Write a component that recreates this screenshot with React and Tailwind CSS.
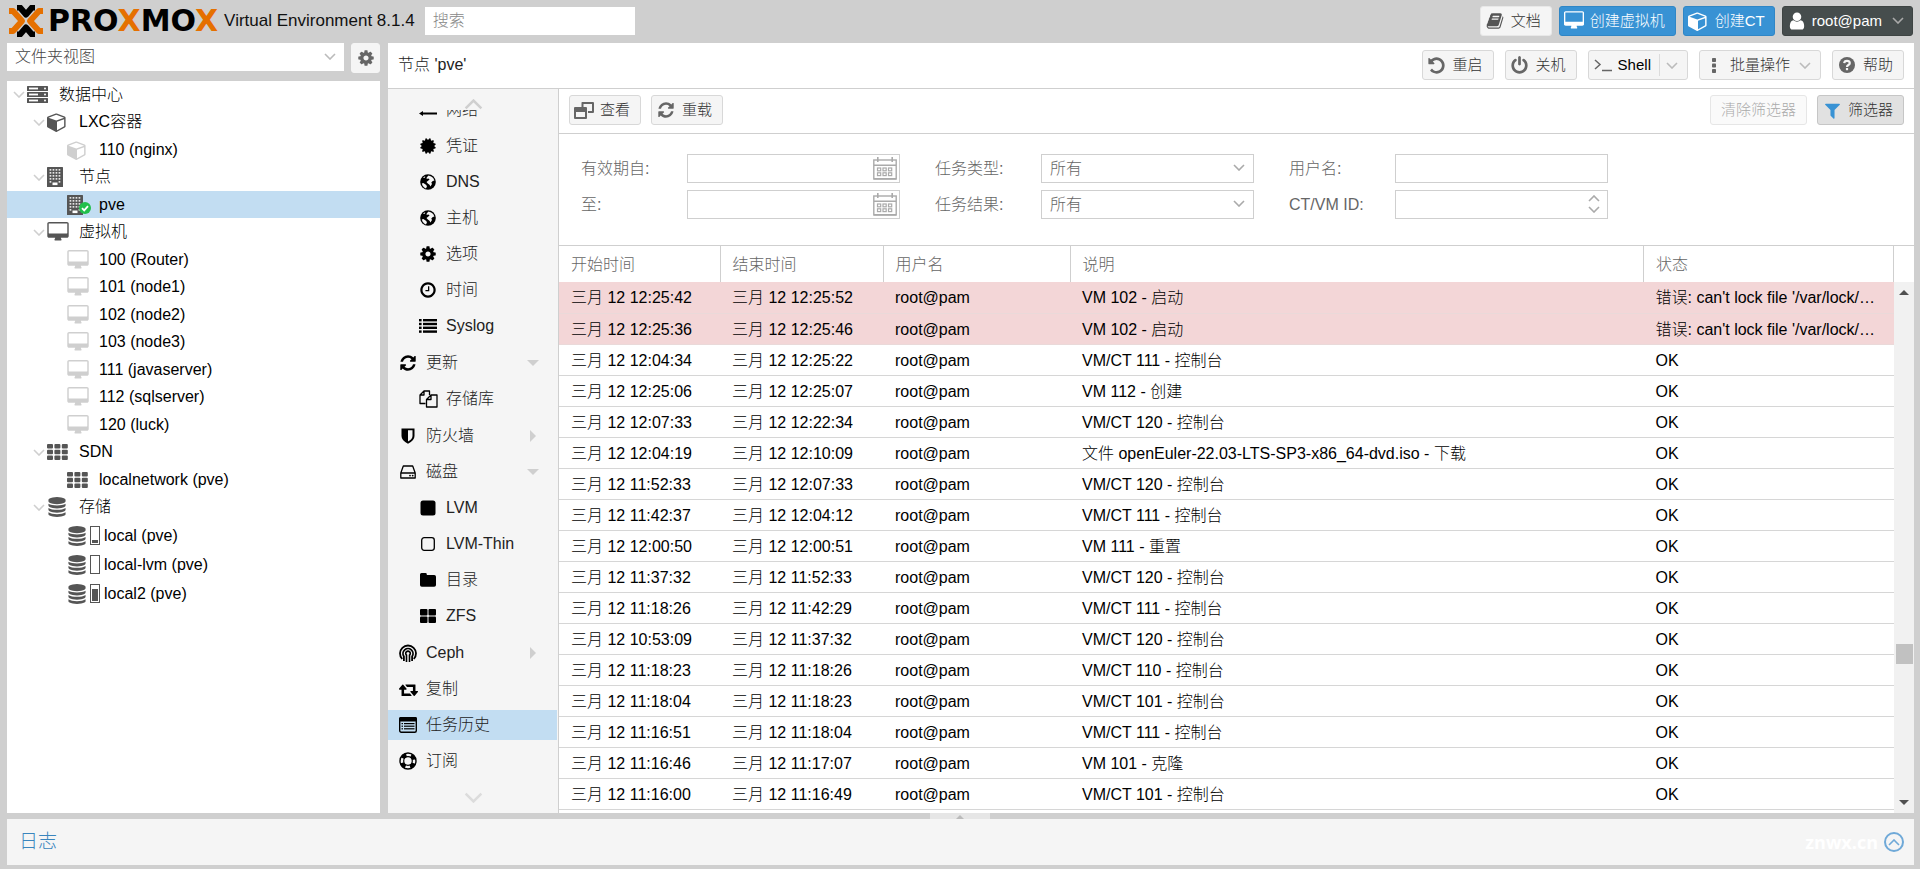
import React, { useState } from 'react';
import clsx from 'clsx';

// Font Awesome 4 shapes on the 1792 grid
const FA = {
  cube: 'M896 1629l640-349v-636l-640 233v752zm-64-865l698-254-698-254-698 254zm832-252v768q0 35-18 65t-49 47l-704 384q-28 16-61 16t-61-16l-704-384q-31-17-49-47t-18-65v-768q0-40 23-73t61-47l704-256q22-8 44-8t44 8l704 256q38 14 61 47t23 73z',
  desktop: 'M1728 992v-832q0-13-9.5-22.5t-22.5-9.5h-1600q-13 0-22.5 9.5t-9.5 22.5v832q0 13 9.5 22.5t22.5 9.5h1600q13 0 22.5-9.5t9.5-22.5zm128-832v1088q0 66-47 113t-113 47h-544q0 37 16 77.5t32 71 16 43.5q0 26-19 45t-45 19h-512q-26 0-45-19t-19-45q0-14 16-44t32-70 16-78h-544q-66 0-113-47t-47-113v-1088q0-66 47-113t113-47h1600q66 0 113 47t47 113z',
  refresh: 'M1639 1056q0 5-1 7-64 268-268 434.5t-478 166.5q-146 0-282.5-55t-243.5-157l-129 129q-19 19-45 19t-45-19-19-45v-448q0-26 19-45t45-19h448q26 0 45 19t19 45-19 45l-137 137q71 66 161 102t187 36q134 0 250-65t186-179q11-17 53-117 8-23 30-23h192q13 0 22.5 9.5t9.5 22.5zm25-800v448q0 26-19 45t-45 19h-448q-26 0-45-19t-19-45 19-45l138-138q-148-137-349-137-134 0-250 65t-186 179q-11 17-53 117-8 23-30 23h-199q-13 0-22.5-9.5t-9.5-22.5v-7q65-268 270-434.5t480-166.5q146 0 284 55.5t245 156.5l130-129q19-19 45-19t45 19 19 45z',
  undo: 'M1664 896q0 156-61 298t-164 245-245 164-298 61q-172 0-327-72.5t-264-204.5q-7-10-6.5-22.5t8.5-20.5l137-138q10-9 25-9 16 2 23 12 73 95 179 147t225 52q104 0 198.5-40.5t163.5-109.5 109.5-163.5 40.5-198.5-40.5-198.5-109.5-163.5-163.5-109.5-198.5-40.5q-98 0-188 35.5t-160 101.5l137 138q31 30 14 69-17 40-59 40h-448q-26 0-45-19t-19-45v-448q0-42 40-59 39-17 69 14l130 129q107-101 244.5-156.5t284.5-55.5q156 0 298 61t245 164 164 245 61 298z',
  power: 'M1664 896q0 156-61 298t-164 245-245 164-298 61-298-61-245-164-164-245-61-298q0-182 80.5-343t226.5-270q43-32 95.5-25t83.5 50q32 42 24.5 94.5t-49.5 84.5q-98 74-151.5 181t-53.5 228q0 104 40.5 198.5t109.5 163.5 163.5 109.5 198.5 40.5 198.5-40.5 163.5-109.5 109.5-163.5 40.5-198.5q0-121-53.5-228t-151.5-181q-42-32-49.5-84.5t24.5-94.5q31-43 84-50t95 25q146 109 226.5 270t80.5 343zm-640-768v640q0 52-38 90t-90 38-90-38-38-90v-640q0-52 38-90t90-38 90 38 38 90z',
  gear: 'M1152 896q0-106-75-181t-181-75-181 75-75 181 75 181 181 75 181-75 75-181zm512-109v222q0 12-8 23t-20 13l-185 28q-19 54-39 91 35 50 107 138 10 12 10 25t-9 23q-27 37-99 108t-94 71q-12 0-26-9l-138-108q-44 23-91 38-16 136-29 186-7 28-36 28h-222q-14 0-24.5-8.5t-11.5-21.5l-28-184q-49-16-90-37l-141 107q-10 9-25 9-14 0-25-11-126-114-165-168-7-10-7-23 0-12 8-23 15-21 51-66.5t54-70.5q-27-50-41-99l-183-27q-13-2-21-12.5t-8-23.5v-222q0-12 8-23t19-13l186-28q14-46 39-92-40-57-107-138-10-12-10-24 0-10 9-23 26-36 98.5-107.5t94.5-71.5q13 0 26 10l138 107q44-23 91-38 16-136 29-186 7-28 36-28h222q14 0 24.5 8.5t11.5 21.5l28 184q49 16 90 37l142-107q9-9 24-9 13 0 25 10 129 119 165 170 7 8 7 22 0 12-8 23-15 21-51 66.5t-54 70.5q26 50 41 98l183 28q13 2 21 12.5t8 23.5z',
  database: 'M896 768q237 0 443-43t325-127v170q0 69-103 128t-280 93.5-385 34.5-385-34.5-280-93.5-103-128v-170q119 84 325 127t443 43zm0 768q237 0 443-43t325-127v170q0 69-103 128t-280 93.5-385 34.5-385-34.5-280-93.5-103-128v-170q119 84 325 127t443 43zm0-384q237 0 443-43t325-127v170q0 69-103 128t-280 93.5-385 34.5-385-34.5-280-93.5-103-128v-170q119 84 325 127t443 43zm0-1152q208 0 385 34.5t280 93.5 103 128v128q0 69-103 128t-280 93.5-385 34.5-385-34.5-280-93.5-103-128v-128q0-69 103-128t280-93.5 385-34.5z',
  user: 'M1536 1399q0 109-62.5 187t-150.5 78h-854q-88 0-150.5-78t-62.5-187q0-85 8.5-160.5t31.5-152 58.5-131 94-89 134.5-34.5q131 128 313 128t313-128q76 0 134.5 34.5t94 89 58.5 131 31.5 152 8.5 160.5zm-256-887q0 159-112.5 271.5t-271.5 112.5-271.5-112.5-112.5-271.5 112.5-271.5 271.5-112.5 271.5 112.5 112.5 271.5z',
  clock: 'M1024 544v448q0 14-9 23t-23 9h-320q-14 0-23-9t-9-23v-64q0-14 9-23t23-9h224v-352q0-14 9-23t23-9h64q14 0 23 9t9 23zm416 352q0-148-73-273t-198-198-273-73-273 73-198 198-73 273 73 273 198 198 273 73 273-73 198-198 73-273zm224 0q0 209-103 385.5t-279.5 279.5-385.5 103-385.5-103-279.5-279.5-103-385.5 103-385.5 279.5-279.5 385.5-103 385.5 103 279.5 279.5 103 385.5z',
  retweet: 'M1216 1568q0 13-9.5 22.5t-22.5 9.5h-960q-8 0-13.5-2t-9-7-5.5-8-3-11.5-1-11.5v-600h-192q-26 0-45-19t-19-45q0-24 15-41l320-384q19-22 49-22t49 22l320 384q15 17 15 41 0 26-19 45t-45 19h-192v384h576q16 0 25 11l160 192q7 10 7 21zm640-416q0 24-15 41l-320 384q-20 23-49 23t-49-23l-320-384q-15-17-15-41 0-26 19-45t45-19h192v-384h-576q-16 0-25-12l-160-192q-7-9-7-20 0-13 9.5-22.5t22.5-9.5h960q8 0 13.5 2t9 7 5.5 8 3 11.5 1 11.5v600h192q26 0 45 19t19 45z',
  filter: 'M1595 295q17 41-14 70l-493 493v742q0 42-39 59-13 5-25 5-27 0-45-19l-256-256q-19-19-19-45v-486l-493-493q-31-29-14-70 17-39 59-39h1280q42 0 59 39z',
  certificate: 'M1504 896l138 135q30 28 20 70-12 41-52 51l-188 48 53 186q12 41-19 70-29 31-70 19l-186-53-48 188q-10 40-51 52-12 2-19 2-31 0-51-22l-135-138-135 138q-28 30-70 20-41-11-51-52l-48-188-186 53q-41 12-70-19-31-29-19-70l53-186-188-48q-40-10-52-51-10-42 20-70l138-135-138-135q-30-28-20-70 12-41 52-51l188-48-53-186q-12-41 19-70 29-31 70-19l186 53 48-188q10-41 51-51 41-12 70 19l135 139 135-139q29-30 70-19 41 10 51 51l48 188 186-53q41-12 70 19 31 29 19 70l-53 186 188 48q40 10 52 51 10 42-20 70z',
  book: 'M1703 478q40 57 18 129l-275 906q-19 64-76.5 107.5t-122.5 43.5h-923q-77 0-148.5-53.5t-99.5-131.5q-24-67-2-127 0-4 3-27t4-37q1-8-3-21.5t-3-19.5q2-11 8-21t16.5-23.5 16.5-23.5q23-38 45-91.5t30-91.5q3-10 .5-30t-.5-28q3-11 17-28t17-23q21-36 42-92t25-90q1-9-2.5-32t.5-28q4-13 22-30.5t22-22.5q19-26 42.5-84.5t27.5-96.5q1-8-3-25.5t-2-26.5q2-8 9-18t18-23 17-21q8-12 16.5-30.5t15-35 16-36 19.5-32 26.5-23.5 36-11.5 47.5 5.5l-1 3q38-9 51-9h761q74 0 114 56t18 130l-274 906q-36 119-71.5 153.5t-128.5 34.5h-869q-27 0-38 15-11 16-1 43 24 70 144 70h923q29 0 56-15.5t35-41.5l300-987q7-22 5-57 38 15 59 43zm-1064 2q-4 13 2 22.5t20 9.5h608q13 0 25.5-9.5t16.5-22.5l21-64q4-13-2-22.5t-20-9.5h-608q-13 0-25.5 9.5t-16.5 22.5zm-83 256q-4 13 2 22.5t20 9.5h608q13 0 25.5-9.5t16.5-22.5l21-64q4-13-2-22.5t-20-9.5h-608q-13 0-25.5 9.5t-16.5 22.5z',
};

const Fa = ({ name, className = 'h-[18px] w-[18px]' }) => {
  const wide = name === 'desktop' || name === 'retweet';
  return (
    <svg viewBox={wide ? '-64 0 1920 1792' : '0 0 1792 1792'} fill="currentColor" className={clsx('shrink-0', className)} aria-hidden="true">
      <path d={FA[name]} />
    </svg>
  );
};

const Svg = ({ box = '0 0 18 18', className = 'h-[18px] w-[18px]', children }) => (
  <svg viewBox={box} fill="currentColor" className={clsx('shrink-0', className)} aria-hidden="true">{children}</svg>
);

const Chevron = ({ up, className = 'h-[7px] w-[12px]' }) => (
  <svg viewBox="0 0 12 7" fill="none" stroke="currentColor" strokeWidth="1.6" className={clsx('shrink-0', up && 'rotate-180', className)} aria-hidden="true">
    <path d="M1 1l5 5 5-5" />
  </svg>
);

const ServerIcon = () => (
  <Svg box="0 0 21 17" className="h-[17px] w-[21px]">
    {[0, 6, 12].map((y) => (
      <g key={y}>
        <rect y={y} width="21" height="5" rx="0.5" />
        <rect x="2" y={y + 1.6} width="9" height="1.8" fill="#fff" />
        <circle cx="18" cy={y + 2.5} r="1" fill="#fff" />
      </g>
    ))}
  </Svg>
);

const BuildingIcon = () => (
  <Svg box="0 0 16 20" className="h-[20px] w-[16px]">
    <rect width="16" height="20" rx="0.5" />
    {[2, 5, 8, 11, 14].map((y) =>
      [2.6, 5.6, 8.6, 11.6].map((x) => (
        (y === 14 && x > 3 && x < 11) ? null : <rect key={`${x}-${y}`} x={x} y={y} width="1.7" height="1.7" fill="#e4e4e4" />
      ))
    )}
    <rect x="5.5" y="15.5" width="5" height="2.6" fill="#fff" />
  </Svg>
);

const GridIcon = () => (
  <Svg box="0 0 21 16" className="h-[16px] w-[21px]">
    {[0, 5.8, 11.6].map((y) => [0, 7.4, 14.8].map((x) => (
      <rect key={`${x}-${y}`} x={x} y={y} width="6" height="4.4" rx="1" />
    )))}
  </Svg>
);

const GlobeIcon = () => (
  <Svg box="0 0 16 16" className="h-[16px] w-[16px]">
    <circle cx="8" cy="8" r="7.8" />
    <path fill="#f5f5f5" d="M8.6 1.6l2.6 0.8 2 1.6 1.2 2.6-1.6 0.3-1.5 1.6 0.7 1.5-1.6 2.4-0.9-1.6-1.7-1.4-1.3-1.3 1.9-1.5 1.2-1.3-1.4-0.8-1.6 0.5 0.2-1.7z" />
    <path fill="#f5f5f5" d="M1.8 9.4l1.5-0.3 1.9 1.2 1.8 1.6-0.6 1.8-0.6 0.8-1.9-1.2-1.4-1.8z" />
    <path fill="#f5f5f5" d="M3 3.9l1.5-1.3 0.9 0.2-1 1.2z" />
  </Svg>
);

const ListIcon = () => (
  <Svg box="0 0 18 14" className="h-[14px] w-[18px]">
    {[0, 3.8, 7.6, 11.4].map((y) => (
      <g key={y}>
        <rect y={y} width="2.6" height="2.4" />
        <rect x="4" y={y} width="14" height="2.4" />
      </g>
    ))}
  </Svg>
);

const FilesIcon = () => (
  <Svg box="0 0 19 18" className="h-[18px] w-[19px]">
    <g fill="none" stroke="currentColor" strokeWidth="1.3" strokeLinejoin="round">
      <path d="M6.5 13.5H1V5L5 1h5.500v4M5 1v4H1" />
      <path d="M12 5h6v12H7.500V9.500zM12 5v4.500H7.500" />
    </g>
  </Svg>
);

const ShieldIcon = () => (
  <Svg box="0 0 14 16" className="h-[16px] w-[14px]">
    <path fillRule="evenodd" d="M0.5 0.5h13v7.6q0 4.6-6.5 7.7Q0.500 12.700 0.500 8.100zM7 2.300v11.200Q11.500 11 11.500 8V2.300z" />
  </Svg>
);

const HddIcon = () => (
  <Svg box="0 0 16 14" className="h-[14px] w-[16px]">
    <path fill="none" stroke="currentColor" strokeWidth="1.3" strokeLinejoin="round" d="M0.800 8L3.300 1h9.400L15.200 8v5H0.800zM0.800 8h14.400" />
    <circle cx="10" cy="10.6" r="0.9" />
    <circle cx="12.700" cy="10.600" r="0.9" />
  </Svg>
);

const CephIcon = () => (
  <Svg box="0 0 18 20" className="h-[20px] w-[18px]">
    <g fill="none" stroke="currentColor">
      <path d="M3.200 16A8 8 0 1 1 14.800 16" strokeWidth="1.800" />
      <path d="M4.900 18V13.500A5 5 0 1 1 13.100 13.500V18" strokeWidth="1.800" />
      <path d="M7.500 19V12.200A2.300 2.300 0 1 1 10.500 12.200V19" strokeWidth="1.600" />
    </g>
  </Svg>
);

const TaskIcon = () => (
  <Svg box="0 0 18 16" className="h-[16px] w-[18px]">
    <rect x="0.700" y="0.700" width="16.600" height="14.600" rx="1.500" fill="none" stroke="currentColor" strokeWidth="1.400" />
    <rect width="18" height="4.500" rx="1.500" />
    {[6, 8.600, 11.200].map((y) => (
      <g key={y}>
        <rect x="2.500" y={y} width="1.500" height="1.200" />
        <rect x="5" y={y} width="10.500" height="1.200" />
      </g>
    ))}
  </Svg>
);

const RingIcon = () => (
  <Svg>
    <g fill="none" stroke="currentColor">
      <circle cx="9" cy="9" r="8" strokeWidth="1.400" />
      <circle cx="9" cy="9" r="4.300" strokeWidth="1.200" />
      <circle cx="9" cy="9" r="6.200" strokeWidth="4" strokeDasharray="4.900 4.840" strokeDashoffset="-2.400" />
    </g>
  </Svg>
);

const NetIcon = () => (
  <Svg box="0 0 18 12" className="h-[12px] w-[18px]">
    <path d="M18 2.500L14 0v1.500H0v2h14V5zM0 9.500L4 7v1.500h14v2H4V12z" />
  </Svg>
);

const SquareIcon = ({ open }) => (
  <Svg box="0 0 16 16" className="h-[16px] w-[16px]">
    {open
      ? <rect x="1.700" y="1.700" width="12.600" height="12.600" rx="2.500" fill="none" stroke="currentColor" strokeWidth="1.300" />
      : <rect x="0.500" y="0.500" width="15" height="15" rx="2.500" />}
  </Svg>
);

const FolderIcon = () => (
  <Svg box="0 0 16 14" className="h-[14px] w-[16px]">
    <path d="M1.500 0h4q1.300 0 1.300 1.300v0.700h7.400Q16 2 16 3.700v8.300q0 1.800-1.800 1.800H1.800Q0 13.800 0 12V1.500Q0 0 1.500 0z" />
  </Svg>
);

const LargeGridIcon = () => (
  <Svg box="0 0 16 14" className="h-[14px] w-[16px]">
    {[0, 7.500].map((y) => [0, 8.500].map((x) => <rect key={`${x}-${y}`} x={x} y={y} width="7.500" height="6.500" rx="1" />))}
  </Svg>
);

const ViewIcon = () => (
  <Svg box="0 0 20 17" className="h-[17px] w-[20px]">
    <path fillRule="evenodd" d="M8 0h11q1 0 1 1v9q0 1-1 1h-5V9h4V2H9.500v3H7.500V1q0-1 .5-1z" />
    <path fillRule="evenodd" d="M1 5h11q1 0 1 1v10q0 1-1 1H1q-1 0-1-1V6q0-1 1-1zm1 5v5h9v-5z" />
  </Svg>
);

const TerminalIcon = () => (
  <Svg box="0 0 18 14">
    <path fill="none" stroke="currentColor" strokeWidth="1.500" d="M1 2l5 4.500L1 11M8 12.500h10" />
  </Svg>
);

const DotsIcon = () => (
  <Svg box="0 0 4 15" className="h-[15px] w-[4px]">
    {[0, 5.500, 11].map((y) => <rect key={y} y={y} width="4" height="4" rx="0.800" />)}
  </Svg>
);

const HelpIcon = () => (
  <Svg box="0 0 16 16" className="h-[16px] w-[16px]">
    <circle cx="8" cy="8" r="8" />
    <path fill="none" stroke="#f5f5f5" strokeWidth="2.200" d="M5.200 6.200Q5.400 3.800 8 3.800T10.800 6Q10.800 7.200 9.400 8T8 10" />
    <rect x="6.900" y="11" width="2.200" height="2.200" fill="#f5f5f5" />
  </Svg>
);

const CalendarIcon = () => (
  <Svg box="0 0 24 23" className="h-[23px] w-[24px]">
    <rect x="0.800" y="3" width="22.400" height="19" fill="none" stroke="currentColor" strokeWidth="1.400" />
    <path d="M1 7.500h22v1.500H1zM4 0h1.600v5H4zM18.400 0H20v5h-1.600zM1 21h22v1.500H1z" />
    {[11, 15.800].map((y) => [4.500, 10, 15.500].map((x) => (
      <rect key={`${x}-${y}`} x={x} y={y} width="3.200" height="2.800" fill="none" stroke="currentColor" strokeWidth="1.200" />
    )))}
  </Svg>
);

// Resource tree
const tree = [
  { level: 1, icon: <ServerIcon />, label: '数据中心' },
  { level: 2, icon: <Fa name="cube" className="h-[20px] w-[20px]" />, label: 'LXC容器' },
  { level: 3, icon: <Fa name="cube" className="h-[20px] w-[20px]" />, label: '110 (nginx)', off: true },
  { level: 2, icon: <BuildingIcon />, label: '节点' },
  { level: 3, icon: <BuildingIcon />, label: 'pve', online: true },
  { level: 2, icon: <Fa name="desktop" className="h-[20px] w-[22px]" />, label: '虚拟机' },
  ...['100 (Router)', '101 (node1)', '102 (node2)', '103 (node3)', '111 (javaserver)', '112 (sqlserver)', '120 (luck)'].map((label) => (
    { level: 3, icon: <Fa name="desktop" className="h-[20px] w-[22px]" />, label, off: true }
  )),
  { level: 2, icon: <GridIcon />, label: 'SDN' },
  { level: 3, icon: <GridIcon />, label: 'localnetwork (pve)' },
  { level: 2, icon: <Fa name="database" className="h-[20px] w-[20px]" />, label: '存储' },
];

const storages = [
  { label: 'local (pve)', usage: 20 },
  { label: 'local-lvm (pve)', usage: 0 },
  { label: 'local2 (pve)', usage: 80 },
];

const indent = { 1: 'pl-[6px]', 2: 'pl-[26px]', 3: 'pl-[60px]' };

const menu = [
  {
    items: [
      { label: '网络', icon: <NetIcon />, sub: true },
      { label: '凭证', icon: <Fa name="certificate" />, sub: true },
      { label: 'DNS', icon: <GlobeIcon />, sub: true },
      { label: '主机', icon: <GlobeIcon />, sub: true },
      { label: '选项', icon: <Fa name="gear" />, sub: true },
      { label: '时间', icon: <Fa name="clock" />, sub: true },
      { label: 'Syslog', icon: <ListIcon />, sub: true },
    ],
  },
  {
    items: [
      { label: '更新', icon: <Fa name="refresh" />, caret: 'down' },
      { label: '存储库', icon: <FilesIcon />, sub: true },
    ],
  },
  {
    items: [
      { label: '防火墙', icon: <ShieldIcon />, caret: 'right' },
      { label: '磁盘', icon: <HddIcon />, caret: 'down' },
      { label: 'LVM', icon: <SquareIcon />, sub: true },
      { label: 'LVM-Thin', icon: <SquareIcon open />, sub: true },
      { label: '目录', icon: <FolderIcon />, sub: true },
      { label: 'ZFS', icon: <LargeGridIcon />, sub: true },
    ],
  },
  {
    items: [
      { label: 'Ceph', icon: <CephIcon />, caret: 'right' },
      { label: '复制', icon: <Fa name="retweet" className="h-[18px] w-[19px]" /> },
      { label: '任务历史', icon: <TaskIcon /> },
      { label: '订阅', icon: <RingIcon /> },
    ],
  },
];

const lockError = "错误: can't lock file '/var/lock/qemu-server/lock-102.conf' - got timeout";

const tasks = [
  ['三月 12 12:25:42', '三月 12 12:25:52', 'VM 102 - 启动', lockError],
  ['三月 12 12:25:36', '三月 12 12:25:46', 'VM 102 - 启动', lockError],
  ['三月 12 12:04:34', '三月 12 12:25:22', 'VM/CT 111 - 控制台', 'OK'],
  ['三月 12 12:25:06', '三月 12 12:25:07', 'VM 112 - 创建', 'OK'],
  ['三月 12 12:07:33', '三月 12 12:22:34', 'VM/CT 120 - 控制台', 'OK'],
  ['三月 12 12:04:19', '三月 12 12:10:09', '文件 openEuler-22.03-LTS-SP3-x86_64-dvd.iso - 下载', 'OK'],
  ['三月 12 11:52:33', '三月 12 12:07:33', 'VM/CT 120 - 控制台', 'OK'],
  ['三月 12 11:42:37', '三月 12 12:04:12', 'VM/CT 111 - 控制台', 'OK'],
  ['三月 12 12:00:50', '三月 12 12:00:51', 'VM 111 - 重置', 'OK'],
  ['三月 12 11:37:32', '三月 12 11:52:33', 'VM/CT 120 - 控制台', 'OK'],
  ['三月 12 11:18:26', '三月 12 11:42:29', 'VM/CT 111 - 控制台', 'OK'],
  ['三月 12 10:53:09', '三月 12 11:37:32', 'VM/CT 120 - 控制台', 'OK'],
  ['三月 12 11:18:23', '三月 12 11:18:26', 'VM/CT 110 - 控制台', 'OK'],
  ['三月 12 11:18:04', '三月 12 11:18:23', 'VM/CT 101 - 控制台', 'OK'],
  ['三月 12 11:16:51', '三月 12 11:18:04', 'VM/CT 111 - 控制台', 'OK'],
  ['三月 12 11:16:46', '三月 12 11:17:07', 'VM 101 - 克隆', 'OK'],
  ['三月 12 11:16:00', '三月 12 11:16:49', 'VM/CT 101 - 控制台', 'OK'],
];

const Button = ({ className = 'border-[#d8d8d8] bg-[#f5f5f5] text-[#333]', children, ...rest }) => (
  <button type="button" className={clsx('flex h-[30px] items-center rounded-[3px] border text-[15px] whitespace-nowrap', className)} {...rest}>
    {children}
  </button>
);

const Logo = () => (
  <a href="#" className="flex items-center pl-2 text-black no-underline" aria-label="Proxmox">
    <svg viewBox="0 0 36 32" className="h-[32px] w-[36px]" fill="none" strokeWidth="6" strokeLinejoin="round" aria-hidden="true">
      <path stroke="#e57000" d="M1 6h4l9 10-9 10h-4M35 6h-4l-9 10 9 10h4" />
      <path stroke="#000" d="M9 2.500h3l6 7 6-7h3M9 29.500h3l6-7 6 7h3" />
    </svg>
    <span className="pl-1 font-['DejaVu_Sans',sans-serif] text-[30px] leading-8 font-bold">
      PRO<span className="text-[#e57000]">X</span>MO<span className="text-[#e57000]">X</span>
    </span>
  </a>
);

const Field = ({ id, label, children }) => (
  <div className="flex items-center">
    <label htmlFor={id} className="w-[106px] shrink-0 text-[#666]">{label}</label>
    <div className="relative w-[213px] text-[#aaa]">{children}</div>
  </div>
);

const fieldClass = 'block h-[29px] w-full appearance-none border border-[#cfcfcf] bg-white px-2 text-[#666] outline-none';

const ResourceTree = () => {
  const [selected, setSelected] = useState('pve');

  return (
    <nav className="flex min-h-0 flex-1 flex-col overflow-hidden bg-white">
      <ul>
        {tree.map((node) => (
          <li
            key={node.label}
            onClick={() => setSelected(node.label)}
            className={clsx('flex items-center odd:h-[27px] even:h-[28px]', indent[node.level], selected === node.label && 'bg-[#c2ddf2]')}
          >
            {node.level < 3 && <span className="w-[14px] text-[#cfcfcf]"><Chevron /></span>}
            <span className={clsx('relative mr-[10px] flex w-[22px]', node.off ? 'text-[#cfcfcf]' : 'text-[#555]')}>
              {node.icon}
              {node.online && (
                <svg viewBox="0 0 12 12" className="absolute top-[7px] left-[12px] h-[12px] w-[12px]" aria-hidden="true">
                  <circle cx="6" cy="6" r="6" fill="#21bf4b" />
                  <path d="M3 6.200l2.200 2.200L9 4.200" fill="none" stroke="#fff" strokeWidth="1.800" />
                </svg>
              )}
            </span>
            <span>{node.label}</span>
          </li>
        ))}
      </ul>
      <ul>
        {storages.map((s) => (
          <li key={s.label} className="flex h-[29px] items-center pl-[60px]">
            <Fa name="database" className="h-[20px] w-[20px] text-[#555]" />
            <span className="mr-[4px] ml-[3px] flex h-[19px] w-[10px] items-end border border-[#555] p-px">
              <span className="w-full bg-[#555]" style={{ height: `${s.usage}%` }} />
            </span>
            <span>{s.label}</span>
          </li>
        ))}
      </ul>
    </nav>
  );
};

const NodeMenu = () => {
  const [active, setActive] = useState('任务历史');

  return (
    <aside className="flex w-[171px] shrink-0 flex-col border-r border-[#cfcfcf] bg-[#f5f5f5] text-[#222]">
      <button type="button" aria-label="向上滚动" className="flex h-[21px] shrink-0 items-end justify-center text-[#cfcfcf]">
        <Chevron up className="h-[11px] w-[19px]" />
      </button>
      <div className="min-h-0 flex-1 overflow-hidden">
        <div className="-mt-[15px] flex flex-col gap-[7px]">
          {menu.map((group, i) => (
            <ul key={i} className="flex flex-col gap-[6px]">
              {group.items.map((item) => (
                <li
                  key={item.label}
                  onClick={() => setActive(item.label)}
                  className={clsx('mr-px flex h-[30px] items-center', item.sub ? 'pl-[30px]' : 'pl-[10px]', active === item.label && 'bg-[#c2ddf2]')}
                >
                  <span className="mr-[8px] flex w-[20px] justify-center text-black">{item.icon}</span>
                  <span>{item.label}</span>
                  {item.caret && (
                    <svg viewBox="0 0 12 12" fill="#cfcfcf" className="mr-[18px] ml-auto h-[12px] w-[12px]" aria-hidden="true">
                      <path d={item.caret === 'down' ? 'M0 3h12L6 9z' : 'M3 0v12l6-6z'} />
                    </svg>
                  )}
                </li>
              ))}
            </ul>
          ))}
        </div>
      </div>
      <button type="button" aria-label="向下滚动" className="flex h-[30px] shrink-0 items-center justify-center pb-px text-[#dcdcdc]">
        <Chevron className="h-[11px] w-[19px]" />
      </button>
    </aside>
  );
};

const TaskTable = () => (
  <div className="flex min-h-0 flex-1 overflow-hidden">
    <div className="min-w-0 flex-1">
      <table className="w-full table-fixed border-collapse text-left">
        <colgroup>
          <col className="w-[161px]" />
          <col className="w-[163px]" />
          <col className="w-[187px]" />
          <col />
          <col className="w-[250px]" />
        </colgroup>
        <thead>
          <tr className="h-[36px] text-[#666]">
            {['开始时间', '结束时间', '用户名', '说明', '状态'].map((h) => (
              <th key={h} className="border-r border-[#cfcfcf] pt-[2px] pr-[11px] pb-0 pl-[12px] font-light">{h}</th>
            ))}
          </tr>
        </thead>
        <tbody>
          {tasks.map(([start, end, desc, status]) => (
            <tr key={start} className={clsx('h-[31px] border-b', status === 'OK' ? 'border-[#d6d6d6]' : 'border-[#ead9d9] bg-[#f3d6d7]')}>
              <td className="pt-[2px] pr-[11px] pb-0 pl-[12px]">{start}</td>
              <td className="pt-[2px] pr-[11px] pb-0 pl-[12px]">{end}</td>
              <td className="pt-[2px] pr-[11px] pb-0 pl-[12px]">root@pam</td>
              <td className="pt-[2px] pr-[11px] pb-0 pl-[12px]">{desc}</td>
              <td className="truncate pt-[2px] pr-[15px] pb-0 pl-[12px]">{status}</td>
            </tr>
          ))}
        </tbody>
      </table>
    </div>
    <div className="flex w-[20px] shrink-0 flex-col pt-[36px]">
      <div className="flex flex-1 flex-col items-center bg-[#f1f1f1] text-[#505050]">
        <svg viewBox="0 0 10 5" fill="currentColor" className="mt-[8px] h-[5px] w-[10px]" aria-hidden="true"><path d="M0 5h10L5 0z" /></svg>
        <span className="flex-[36]" />
        <span className="h-[20px] w-[17px] bg-[#c1c1c1]" />
        <span className="flex-[14]" />
        <svg viewBox="0 0 10 5" fill="currentColor" className="mb-[8px] h-[5px] w-[10px]" aria-hidden="true"><path d="M0 0h10L5 5z" /></svg>
      </div>
    </div>
  </div>
);

const App = () => {
  const [showFilter, setShowFilter] = useState(true);

  return (
    <div className="flex h-screen flex-col bg-[#cfcfcf] font-['Liberation_Sans','Noto_Sans_CJK_SC',sans-serif] text-[16px] leading-5 font-light text-black">
      <header className="flex h-[43px] shrink-0 items-center pr-[7px] pb-[2px]">
        <Logo />
        <span className="pl-[6px] text-[17px] whitespace-nowrap text-[#111]">Virtual Environment 8.1.4</span>
        <input type="search" aria-label="搜索" placeholder="搜索" className="ml-[10px] h-[28px] w-[210px] bg-white px-2 outline-none placeholder:text-[#888]" />
        <div className="ml-auto flex gap-[7px]">
          <Button className="border-[#e8e8e8] bg-[#f5f5f5] pr-[10px] pl-[5px] text-[#333]">
            <Fa name="book" className="mr-[7px] h-[18px] w-[18px] text-[#555]" />
            文档
          </Button>
          <Button className="border-[#2f86c6] bg-[#3892d4] pr-[10px] pl-[4px] text-white">
            <Fa name="desktop" className="mr-[6px] h-[19px] w-[20px]" />
            创建虚拟机
          </Button>
          <Button className="border-[#2f86c6] bg-[#3892d4] pr-[9px] pl-[4px] text-white">
            <Fa name="cube" className="mr-[7px] h-[20px] w-[20px]" />
            创建CT
          </Button>
          <Button className="border-[#3e4443] bg-[#464d4d] pr-[8px] pl-[4px] text-white">
            <Fa name="user" className="mr-[5px] h-[20px] w-[20px]" />
            root@pam
            <Chevron className="ml-[10px] h-[7px] w-[12px] text-[#aaa]" />
          </Button>
        </div>
      </header>

      <div className="flex min-h-0 flex-1 pr-[6px] pl-[7px]">
        {/* Left column */}
        <div className="flex w-[373px] shrink-0 flex-col">
          <div className="mb-[8px] flex gap-[7px]">
            <div className="relative flex-1">
              <select aria-label="视图" className="block h-[28px] w-full appearance-none bg-white px-[8px] text-[#444] outline-none">
                <option>文件夹视图</option>
              </select>
              <span className="pointer-events-none absolute top-[10px] right-[8px] text-[#bbb]"><Chevron /></span>
            </div>
            <Button aria-label="设置" className="w-[29px] justify-center border-[#f5f5f5] bg-[#f5f5f5] text-[#666]">
              <Fa name="gear" />
            </Button>
          </div>
          <ResourceTree />
        </div>

        {/* Node panel */}
        <main className="ml-[8px] flex min-w-0 flex-1 flex-col bg-white">
          <div className="flex h-[46px] shrink-0 items-center gap-[11px] border-b border-[#cfcfcf] pr-[10px] pb-px pl-[10px]">
            <h1 className="mr-auto text-[#222]">节点 'pve'</h1>
            <Button className="border-[#d8d8d8] bg-[#f5f5f5] pr-[10px] pl-[4px] text-[#333]">
              <Fa name="undo" className="mr-[7px] h-[19px] w-[19px] text-[#666]" />
              重启
            </Button>
            <Button className="border-[#d8d8d8] bg-[#f5f5f5] pr-[10px] pl-[4px] text-[#333]">
              <Fa name="power" className="mr-[7px] h-[19px] w-[19px] text-[#666]" />
              关机
            </Button>
            <Button className="border-[#d8d8d8] bg-[#f5f5f5] pr-[9px] pl-[5px] text-black">
              <span className="mr-[6px] text-[#666]"><TerminalIcon /></span>
              Shell
              <span className="ml-[8px] flex h-[22px] items-center border-l border-[#dcdcdc] pl-[6px] text-[#bbb]"><Chevron /></span>
            </Button>
            <Button className="border-[#d8d8d8] bg-[#f5f5f5] pr-[9px] pl-[12px] text-[#333]">
              <span className="mr-[14px] text-[#666]"><DotsIcon /></span>
              批量操作
              <Chevron className="ml-[9px] h-[7px] w-[12px] text-[#bbb]" />
            </Button>
            <Button className="border-[#d8d8d8] bg-[#f5f5f5] pr-[10px] pl-[6px] text-[#333]">
              <span className="mr-[8px] text-[#666]"><HelpIcon /></span>
              帮助
            </Button>
          </div>

          <div className="flex min-h-0 flex-1">
            <NodeMenu />
            <section className="flex min-w-0 flex-1 flex-col">
              <div className="flex h-[45px] shrink-0 items-center gap-[10px] border-b border-[#cfcfcf] px-[10px] pb-[2px]">
                <Button className="border-[#d8d8d8] bg-[#f5f5f5] pr-[10px] pl-[4px] text-[#333]">
                  <span className="mr-[6px] text-[#666]"><ViewIcon /></span>
                  查看
                </Button>
                <Button className="border-[#d8d8d8] bg-[#f5f5f5] pr-[10px] pl-[5px] text-[#333]">
                  <Fa name="refresh" className="mr-[7px] h-[18px] w-[18px] text-[#666]" />
                  重载
                </Button>
                <Button disabled className="ml-auto border-[#e6e6e6] bg-[#fafafa] px-[10px] text-[#aaa]">清除筛选器</Button>
                <Button onClick={() => setShowFilter(!showFilter)} className="border-[#c6c6c6] bg-[#e1e1e1] pr-[10px] pl-[5px] text-[#333]">
                  <Fa name="filter" className="mr-[6px] h-[19px] w-[19px] text-[#3892d4]" />
                  筛选器
                </Button>
              </div>

              {showFilter && (
                <form className="flex h-[112px] shrink-0 gap-[35px] border-b border-[#cfcfcf] pt-[20px] pl-[22px]">
                  <div className="flex flex-col gap-[7px]">
                    {[['since', '有效期自:'], ['until', '至:']].map(([id, label]) => (
                      <Field key={id} id={id} label={label}>
                        <input id={id} type="text" className={fieldClass} />
                        <span className="pointer-events-none absolute top-[3px] right-[3px]"><CalendarIcon /></span>
                      </Field>
                    ))}
                  </div>
                  <div className="flex flex-col gap-[7px]">
                    {[['type', '任务类型:'], ['result', '任务结果:']].map(([id, label]) => (
                      <Field key={id} id={id} label={label}>
                        <select id={id} className={fieldClass}>
                          <option>所有</option>
                        </select>
                        <span className="pointer-events-none absolute top-[10px] right-[9px]"><Chevron /></span>
                      </Field>
                    ))}
                  </div>
                  <div className="flex flex-col gap-[7px]">
                    <Field id="user" label="用户名:">
                      <input id="user" type="text" className={fieldClass} />
                    </Field>
                    <Field id="vmid" label="CT/VM ID:">
                      <input id="vmid" type="text" inputMode="numeric" className={fieldClass} />
                      <span className="pointer-events-none absolute top-[5px] right-[8px] flex flex-col gap-[4px]">
                        <Chevron up />
                        <Chevron />
                      </span>
                    </Field>
                  </div>
                </form>
              )}

              <TaskTable />
            </section>
          </div>
        </main>
      </div>

      {/* Splitter */}
      <div className="flex h-[6px] shrink-0 justify-center">
        <div className="flex w-[60px] items-end justify-center bg-[#e6e6e6]">
          <svg viewBox="0 0 8 4" fill="#bbb" className="h-[4px] w-[8px]" aria-hidden="true"><path d="M0 4h8L4 0z" /></svg>
        </div>
      </div>

      <footer className="mr-[6px] mb-[4px] ml-[7px] flex h-[46px] shrink-0 items-center bg-[#f5f5f5] pr-[10px] pl-[12px]">
        <h2 className="text-[19px] text-[#3a85bd]">日志</h2>
        <span className="mr-[6px] ml-auto font-['Open_Sans',sans-serif] text-[18px] font-bold text-white">znwx.cn</span>
        <button type="button" aria-label="展开日志" className="flex h-[20px] w-[20px] items-center justify-center rounded-full border-2 border-[#6fa9d8] text-[#6fa9d8]">
          <Chevron up className="h-[7px] w-[12px]" />
        </button>
      </footer>
    </div>
  );
};

export default App;
